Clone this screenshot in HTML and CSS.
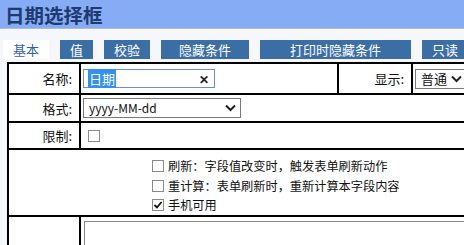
FILE: index.html
```html
<!DOCTYPE html>
<html lang="zh-CN">
<head>
    <meta charset="UTF-8">
    <title>日期选择框</title>
    <link rel="stylesheet" href="styles.css">
</head>
<body>
    <div class="title">日期选择框</div>

    <div class="tabs">
        <div class="tab active">基本</div>
        <div class="tab">值</div>
        <div class="tab">校验</div>
        <div class="tab wide">隐藏条件</div>
        <div class="tab wider">打印时隐藏条件</div>
        <div class="tab">只读</div>
    </div>

    <div class="form">
        <div class="cell label">名称:</div>
        <div class="cell">
            <div class="textbox"><span class="sel">日期</span><span class="clear">✕</span></div>
        </div>
        <div class="cell label">显示:</div>
        <div class="cell">
            <div class="select small">普通
                <svg class="chev" width="11" height="8" viewBox="0 0 11 8"><polyline points="1,1.5 5.5,6 10,1.5" fill="none" stroke="#222" stroke-width="2"/></svg>
            </div>
        </div>

        <div class="cell label">格式:</div>
        <div class="cell span3">
            <div class="select format">yyyy-MM-dd
                <svg class="chev" width="11" height="8" viewBox="0 0 11 8"><polyline points="1,1.5 5.5,6 10,1.5" fill="none" stroke="#222" stroke-width="2"/></svg>
            </div>
        </div>

        <div class="cell label">限制:</div>
        <div class="cell span3">
            <span class="box"></span>
        </div>

        <div class="cell span4 options">
            <div class="opt"><span class="box"></span>刷新：字段值改变时，触发表单刷新动作</div>
            <div class="opt"><span class="box"></span>重计算：表单刷新时，重新计算本字段内容</div>
            <div class="opt"><span class="box checked"><svg width="10" height="10" viewBox="0 0 10 10"><polyline points="1.5,5 4,7.5 8.5,2" fill="none" stroke="#111" stroke-width="1.8"/></svg></span>手机可用</div>
        </div>

        <div class="cell label"></div>
        <div class="cell span3">
            <div class="memo"></div>
        </div>
    </div>
</body>
</html>
```

FILE: styles.css
```css
body {
    margin: 0;
    width: 464px;
    height: 245px;
    overflow: hidden;
    background-color: #f5f7fb;
    font-family: "Noto Sans CJK SC", "Noto Sans", sans-serif;
    font-size: 13px;
    color: #111;
}
.title {
    height: 28px;
    line-height: 29px;
    padding-left: 5px;
    background-color: #87acf6;
    border-bottom: 1px solid #b3bccb;
    color: #1d3b6c;
    font-size: 19.5px;
    font-weight: bold;
}
.tabs {
    display: flex;
    gap: 11px;
    margin-top: 11px;
    padding-left: 3px;
    white-space: nowrap;
}
.tab {
    height: 19px;
    line-height: 19px;
    padding: 0 10px;
    background-color: #3c6ea6;
    color: #fff;
    text-align: center;
}
.tab.active {
    width: 27px;
    background-color: #fff;
    color: #2f64a0;
}
.tab.wide {
    width: 52px;
    padding: 0 18px;
}
.tab.wider {
    width: 92px;
    padding: 0 30px;
}
.form {
    display: grid;
    grid-template-columns: 70px 256px 72px 120px;
    grid-template-rows: 29px 26px 25px 65px 40px;
    gap: 2px;
    width: 526px;
    margin: 3px 0 0 7px;
    padding: 2px;
    background-color: #000;
}
.cell {
    display: flex;
    align-items: center;
    background-color: #fff;
}
.label {
    justify-content: flex-end;
    padding-right: 7px;
}
.span3 {
    grid-column: span 3;
}
.span4 {
    grid-column: span 4;
}
.textbox {
    position: relative;
    width: 130px;
    height: 17px;
    margin-left: 2px;
    border: 1px solid #6f8fc2;
    line-height: 17px;
}
.sel {
    margin-left: 4px;
    padding: 0 1px;
    background-color: #3390f0;
    color: #fff;
}
.clear {
    position: absolute;
    right: 5px;
    top: 0;
    font-size: 12px;
    font-weight: bold;
    color: #222;
}
.select {
    position: relative;
    height: 18px;
    border: 1px solid #7a7a7a;
    line-height: 18px;
    background-color: #fff;
}
.select .chev {
    position: absolute;
    right: 4px;
    top: 5px;
}
.select.small {
    width: 50px;
    margin-left: 2px;
    padding-left: 5px;
    font-size: 13px;
}
.select.small .chev {
    right: 9px;
}
.select.format {
    width: 151px;
    margin-left: 2px;
    padding-left: 5px;
    font-size: 12px;
}
.box {
    display: inline-block;
    box-sizing: border-box;
    width: 12px;
    height: 12px;
    margin-left: 7px;
    border: 1px solid #8a8a8a;
    background-color: #fff;
}
.box.checked svg {
    display: block;
    margin: 0;
}
.options {
    flex-direction: column;
    align-items: flex-start;
    justify-content: flex-start;
    padding: 6px 0 0 143px;
    font-size: 12.2px;
}
.opt {
    display: flex;
    align-items: center;
    height: 21px;
}
.opt .box {
    margin: 0 4px 0 0;
}
.memo {
    align-self: flex-start;
    width: 400px;
    height: 40px;
    margin: 4px 0 0 3px;
    border: 1px solid #888;
    border-right: none;
    border-bottom: none;
}
```
